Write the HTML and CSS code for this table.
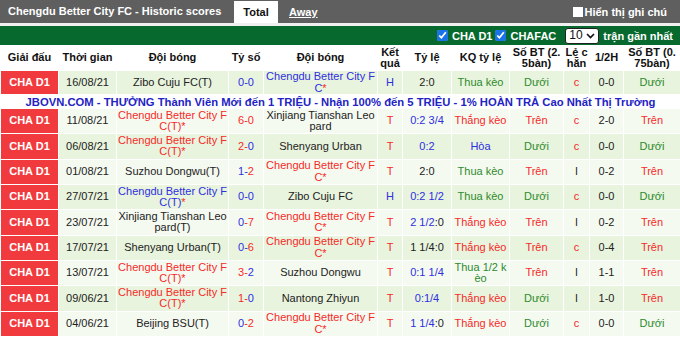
FILE: index.html
```html
<!DOCTYPE html>
<html lang="vi">
<head>
<meta charset="utf-8">
<title>Chengdu Better City FC - Historic scores</title>
<link rel="stylesheet" href="styles.css">
</head>
<body>
<div class="panel">
  <div class="titlebar">
    <div class="title">Chengdu Better City FC - Historic scores</div>
    <div class="tab tab-active">Total</div>
    <div class="tab tab-link">Away</div>
    <label class="note"><span class="box"></span>Hiển thị ghi chú</label>
  </div>
  <div class="gap"></div>
  <div class="filterbar">
    <label class="chk"><input type="checkbox" checked>CHA D1</label>
    <label class="chk"><input type="checkbox" checked>CHAFAC</label>
    <span class="count">
      <select><option>10</option></select>
      <svg class="caret" width="9" height="6" viewBox="0 0 9 6"><path d="M1 1 L4.5 4.5 L8 1" fill="none" stroke="#111" stroke-width="1.6"/></svg>
    </span>
    <span class="recent">trận gần nhất</span>
  </div>
  <table class="scores">
    <colgroup>
      <col class="c-league"><col class="c-date"><col class="c-home"><col class="c-score"><col class="c-away">
      <col class="c-res"><col class="c-hc"><col class="c-hcres"><col class="c-ou"><col class="c-oe"><col class="c-half"><col class="c-ou2">
    </colgroup>
    <thead>
      <tr>
        <th>Giải đấu</th><th>Thời gian</th><th>Đội bóng</th><th>Tỷ số</th><th>Đội bóng</th>
        <th>Kết quả</th><th>Tỷ lệ</th><th>KQ tỷ lệ</th><th>Số BT (2. 5bàn)</th><th>Lẻ chẵn</th><th>1/2H</th><th>Số BT (0. 75bàn)</th>
      </tr>
    </thead>
    <tbody>
      <tr class="g first">
        <td class="lg">CHA D1</td><td>16/08/21</td><td>Zibo Cuju FC(T)</td><td class="b">0-0</td><td class="b">Chengdu Better City FC<span class="r">*</span></td>
        <td class="b">H</td><td>2:0</td><td class="gr">Thua kèo</td><td class="gr">Dưới</td><td class="r">c</td><td>0-0</td><td class="gr">Dưới</td>
      </tr>
      <tr class="ad">
        <td colspan="12">JBOVN.COM - THƯỞNG Thành Viên Mới đến 1 TRIỆU - Nhận 100% đến 5 TRIỆU - 1% HOÀN TRẢ Cao Nhất Thị Trường</td>
      </tr>
      <tr class="w">
        <td class="lg">CHA D1</td><td>11/08/21</td><td class="r">Chengdu Better City FC(T)*</td><td><span class="r">6-0</span></td><td>Xinjiang Tianshan Leopard</td>
        <td class="r">T</td><td class="b">0:2 3/4</td><td class="r">Thắng kèo</td><td class="r">Trên</td><td class="r">c</td><td>2-0</td><td class="r">Trên</td>
      </tr>
      <tr class="g">
        <td class="lg">CHA D1</td><td>06/08/21</td><td class="r">Chengdu Better City FC(T)*</td><td><span class="r">2-</span><span class="b">0</span></td><td>Shenyang Urban</td>
        <td class="r">T</td><td class="b">0:2</td><td class="b">Hòa</td><td class="gr">Dưới</td><td class="r">c</td><td>0-0</td><td class="gr">Dưới</td>
      </tr>
      <tr class="w">
        <td class="lg">CHA D1</td><td>01/08/21</td><td>Suzhou Dongwu(T)</td><td><span class="b">1-</span><span class="r">2</span></td><td class="r">Chengdu Better City FC*</td>
        <td class="r">T</td><td>2:0</td><td class="gr">Thua kèo</td><td class="r">Trên</td><td>l</td><td>0-2</td><td class="r">Trên</td>
      </tr>
      <tr class="g">
        <td class="lg">CHA D1</td><td>27/07/21</td><td class="b">Chengdu Better City FC(T)<span class="r">*</span></td><td class="b">0-0</td><td>Zibo Cuju FC</td>
        <td class="b">H</td><td class="b">0:2 1/2</td><td class="gr">Thua kèo</td><td class="gr">Dưới</td><td class="r">c</td><td>0-0</td><td class="gr">Dưới</td>
      </tr>
      <tr class="w">
        <td class="lg">CHA D1</td><td>23/07/21</td><td>Xinjiang Tianshan Leopard(T)</td><td><span class="b">0</span><span class="r">-7</span></td><td class="r">Chengdu Better City FC*</td>
        <td class="r">T</td><td><span class="b">2 1/2</span>:0</td><td class="r">Thắng kèo</td><td class="r">Trên</td><td>l</td><td>0-2</td><td class="r">Trên</td>
      </tr>
      <tr class="g">
        <td class="lg">CHA D1</td><td>17/07/21</td><td>Shenyang Urban(T)</td><td><span class="b">0-</span><span class="r">6</span></td><td class="r">Chengdu Better City FC*</td>
        <td class="r">T</td><td>1 1/4:0</td><td class="r">Thắng kèo</td><td class="r">Trên</td><td class="r">c</td><td>0-4</td><td class="r">Trên</td>
      </tr>
      <tr class="w">
        <td class="lg">CHA D1</td><td>13/07/21</td><td class="r">Chengdu Better City FC(T)*</td><td><span class="r">3-</span><span class="b">2</span></td><td>Suzhou Dongwu</td>
        <td class="r">T</td><td class="b">0:1 1/4</td><td class="gr">Thua 1/2 kèo</td><td class="r">Trên</td><td>l</td><td>1-1</td><td class="r">Trên</td>
      </tr>
      <tr class="g">
        <td class="lg">CHA D1</td><td>09/06/21</td><td class="r">Chengdu Better City FC(T)*</td><td><span class="r">1-</span><span class="b">0</span></td><td>Nantong Zhiyun</td>
        <td class="r">T</td><td class="b">0:1/4</td><td class="r">Thắng kèo</td><td class="gr">Dưới</td><td>l</td><td>1-0</td><td class="r">Trên</td>
      </tr>
      <tr class="w">
        <td class="lg">CHA D1</td><td>04/06/21</td><td>Beijing BSU(T)</td><td><span class="b">0</span><span class="r">-2</span></td><td class="r">Chengdu Better City FC*</td>
        <td class="r">T</td><td><span class="b">1 1/4</span>:0</td><td class="r">Thắng kèo</td><td class="gr">Dưới</td><td class="r">c</td><td>0-0</td><td class="gr">Dưới</td>
      </tr>
    </tbody>
  </table>
</div>
</body>
</html>
```

FILE: styles.css
```css
* { box-sizing: border-box; }

body {
  margin: 0;
  background: #fff;
  font-family: "Liberation Sans", Arial, sans-serif;
  font-size: 11px;
  color: #222;
}

.panel { width: 680px; }

.titlebar {
  display: flex;
  height: 23px;
  background: #5f5f5f;
  color: #fff;
  font-weight: bold;
}

.title {
  width: 234px;
  padding-left: 8px;
  line-height: 23px;
}

.tab {
  margin-top: 1px;
  line-height: 22px;
}

.tab-active {
  width: 44px;
  text-align: center;
  background: #fff;
  color: #111;
}

.tab-link {
  padding-left: 11px;
  text-decoration: underline;
}

.note {
  margin-left: auto;
  padding-right: 13px;
  display: flex;
  align-items: center;
}

.box {
  width: 10px;
  height: 10px;
  margin-right: 2px;
  background: #fff;
}

.gap { height: 3px; background: #f0f0f0; }

.filterbar {
  height: 19px;
  padding-right: 7px;
  display: flex;
  align-items: center;
  justify-content: flex-end;
  background: #07692d;
  color: #fff;
  font-weight: bold;
  font-size: 11px;
}

.chk {
  display: flex;
  align-items: center;
  margin-right: 3px;
}

.chk input {
  width: 11px;
  height: 11px;
  margin: 0 4px 0 0;
  accent-color: #1a73e8;
}

.count {
  position: relative;
  width: 34px;
  height: 16px;
  margin: 0 4px 0 6px;
}

.count select {
  appearance: none;
  -webkit-appearance: none;
  display: block;
  width: 100%;
  height: 100%;
  margin: 0;
  padding: 0 0 0 3px;
  border: 1.5px solid #222;
  border-radius: 3px;
  background: #fff;
  color: #111;
  font-family: "Liberation Sans", Arial, sans-serif;
  font-size: 12px;
  line-height: 13px;
}

.caret {
  position: absolute;
  right: 4px;
  top: 5px;
  pointer-events: none;
}

.scores {
  width: 680px;
  table-layout: fixed;
  border-collapse: collapse;
}

.c-league { width: 58px; }
.c-date { width: 58px; }
.c-home { width: 112px; }
.c-score { width: 35px; }
.c-away { width: 114px; }
.c-res { width: 25px; }
.c-hc { width: 49px; }
.c-hcres { width: 58px; }
.c-ou { width: 54px; }
.c-oe { width: 26px; }
.c-half { width: 34px; }
.c-ou2 { width: 57px; }

.scores th,
.scores td {
  padding: 0;
  border: 1px solid #fff;
  text-align: center;
  vertical-align: middle;
  line-height: 11.5px;
  word-break: break-all;
}

.scores th {
  height: 25px;
  color: #111;
  font-weight: bold;
  background: #fff;
}

.scores tbody tr { height: 25.33px; }
.scores tbody tr.first { height: 24px; }

.g td { background: #e8f4dd; }
.w td { background: #f5faf1; }

.scores td.lg {
  background: #f03a3e;
  color: #fff;
  font-weight: bold;
}

.scores tr.ad { height: 14px; }

.ad td {
  background: #fff;
  color: #2323c4;
  font-weight: bold;
  font-size: 11.25px;
  line-height: 12px;
  word-break: normal;
  white-space: nowrap;
}

.r { color: #f52a2a; }
.b { color: #2f2fe0; }
.gr { color: #2e8a2e; }
```
